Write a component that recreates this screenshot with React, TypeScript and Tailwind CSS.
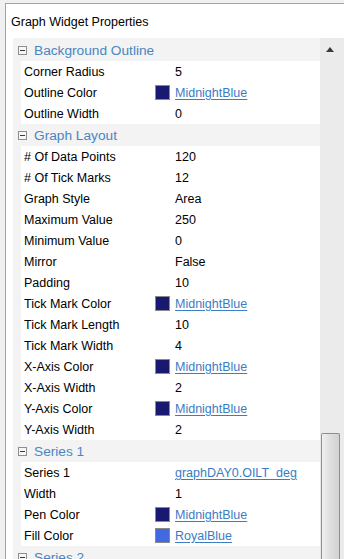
import React from 'react';

type Prop = {
  name: string;
  value: string;
  swatch?: string;
  link?: boolean;
};

type Group = {
  title: string;
  props: Prop[];
};

const groups: Group[] = [
  {
    title: 'Background Outline',
    props: [
      { name: 'Corner Radius', value: '5' },
      { name: 'Outline Color', value: 'MidnightBlue', swatch: '#191970', link: true },
      { name: 'Outline Width', value: '0' },
    ],
  },
  {
    title: 'Graph Layout',
    props: [
      { name: '# Of Data Points', value: '120' },
      { name: '# Of Tick Marks', value: '12' },
      { name: 'Graph Style', value: 'Area' },
      { name: 'Maximum Value', value: '250' },
      { name: 'Minimum Value', value: '0' },
      { name: 'Mirror', value: 'False' },
      { name: 'Padding', value: '10' },
      { name: 'Tick Mark Color', value: 'MidnightBlue', swatch: '#191970', link: true },
      { name: 'Tick Mark Length', value: '10' },
      { name: 'Tick Mark Width', value: '4' },
      { name: 'X-Axis Color', value: 'MidnightBlue', swatch: '#191970', link: true },
      { name: 'X-Axis Width', value: '2' },
      { name: 'Y-Axis Color', value: 'MidnightBlue', swatch: '#191970', link: true },
      { name: 'Y-Axis Width', value: '2' },
    ],
  },
  {
    title: 'Series 1',
    props: [
      { name: 'Series 1', value: 'graphDAY0.OILT_deg', link: true },
      { name: 'Width', value: '1' },
      { name: 'Pen Color', value: 'MidnightBlue', swatch: '#191970', link: true },
      { name: 'Fill Color', value: 'RoyalBlue', swatch: '#4169e1', link: true },
    ],
  },
  {
    title: 'Series 2',
    props: [],
  },
];

function GroupHeader({ title }: { title: string }) {
  return (
    <div className="flex h-[22px] items-center">
      <div className="ml-[5px] flex h-[9px] w-[9px] items-center justify-center border border-[#8e8e8e] bg-[#f7f7f7]">
        <div className="h-px w-[5px] bg-[#3a3a3a]" />
      </div>
      <span className="ml-[7px] pt-px text-[13.7px] leading-none text-[#4a85c2]">{title}</span>
    </div>
  );
}

function PropRow({ prop }: { prop: Prop }) {
  return (
    <div className="ml-[8px] flex h-[21px] items-center bg-white text-[12.5px] leading-none text-black">
      <div className="w-[131px] shrink-0 pl-[3px] pt-px">{prop.name}</div>
      <div className="flex w-[23px] shrink-0 items-center">
        {prop.swatch && (
          <div
            className="ml-[3px] h-[15px] w-[15px] border border-[#8a8a8a]"
            style={{ backgroundColor: prop.swatch }}
          />
        )}
      </div>
      <div className={prop.link ? 'pt-px text-[#3b7cc3] underline underline-offset-2' : 'pt-px'}>
        {prop.value}
      </div>
    </div>
  );
}

export default function App() {
  return (
    <div
      className="h-[559px] w-[344px] overflow-hidden bg-[#f0f0f0]"
      style={{ fontFamily: '"Liberation Sans", Arial, sans-serif' }}
    >
      <div className="ml-[5px] mt-[3px] flex h-[556px] flex-col border-l border-t border-[#a3a3a3] bg-white">
        {/* Title */}
        <div className="flex h-[34px] shrink-0 items-center pl-[5px] pt-[2px] text-[12.5px] text-black">
          Graph Widget Properties
        </div>

        {/* Grid + scrollbar */}
        <div className="ml-[7px] flex flex-1 overflow-hidden">
          <div className="flex-1 bg-[#f3f3f3] pt-px">
            {groups.map((g) => (
              <div key={g.title}>
                <GroupHeader title={g.title} />
                {g.props.map((p) => (
                  <PropRow key={g.title + p.name} prop={p} />
                ))}
              </div>
            ))}
          </div>

          {/* Scrollbar */}
          <div className="flex w-[24px] shrink-0 flex-col bg-[#ebebeb]">
            <div className="flex h-[22px] items-center justify-center pr-[4px] pt-[1px]">
              <svg width="8" height="5" viewBox="0 0 8 5">
                <path d="M0 5 L4 0 L8 5 Z" fill="#3c3c3c" />
              </svg>
            </div>
            <div className="flex-1" />
            <div className="ml-px h-[126px] w-[19px] rounded-t-[2px] border border-b-0 border-[#8f8f8f] bg-gradient-to-r from-[#f0f0f0] via-[#dedede] to-[#d2d2d2]" />
          </div>
        </div>
      </div>
    </div>
  );
}
